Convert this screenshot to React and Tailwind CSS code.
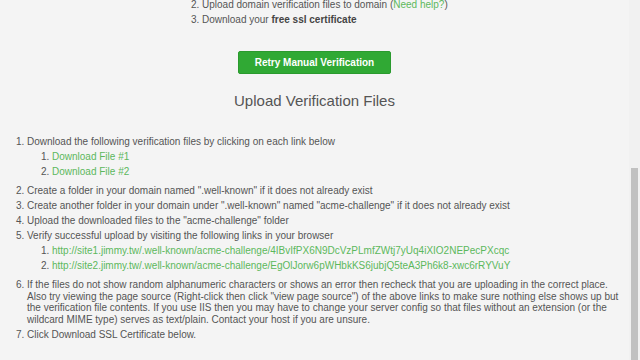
export default function App() {
  const links = [
    'http://site1.jimmy.tw/.well-known/acme-challenge/4IBvIfPX6N9DcVzPLmfZWtj7yUq4iXIO2NEPecPXcqc',
    'http://site2.jimmy.tw/.well-known/acme-challenge/EgOlJorw6pWHbkKS6jubjQ5teA3Ph6k8-xwc6rRYVuY',
  ]

  return (
    <div
      className="flex h-[360px] w-[640px] overflow-hidden bg-[#f4f4f4] text-[#555]"
      style={{ fontFamily: '"Liberation Sans", Arial, sans-serif' }}
    >
      <div className="min-w-0 flex-1">
        {/* steps at top, partly scrolled away */}
        <ol start={2} className="ml-[202px] mt-[-2px] list-decimal text-[10px] leading-[14.5px]">
          <li>
            Upload domain verification files to domain (<span className="text-[#5cb85c]">Need help?</span>)
          </li>
          <li>
            Download your <b className="text-[#444]">free ssl certificate</b>
          </li>
        </ol>

        <button className="mx-auto mt-[24px] flex h-[23px] w-[153px] items-center justify-center rounded-[2px] border border-[#2a9a2e] bg-[#30a934] text-[10px] font-bold text-white">
          Retry Manual Verification
        </button>

        <h2 className="mt-[18px] text-center text-[15px] leading-[18px] text-[#555]">Upload Verification Files</h2>

        <ol className="mt-[26px] list-decimal pl-[27px] pr-[9px] text-[10px] leading-[11.5px]">
          <li className="mb-[3.5px]">
            Download the following verification files by clicking on each link below
            <ol className="mb-[7px] list-decimal pl-[25px]">
              <li className="mt-[3.5px] text-[#5cb85c] marker:text-[#555]">Download File #1</li>
              <li className="mt-[3.5px] text-[#5cb85c] marker:text-[#555]">Download File #2</li>
            </ol>
          </li>
          <li className="mb-[3.5px]">Create a folder in your domain named ".well-known" if it does not already exist</li>
          <li className="mb-[3.5px]">
            Create another folder in your domain under ".well-known" named "acme-challenge" if it does not already exist
          </li>
          <li className="mb-[3.5px]">Upload the downloaded files to the "acme-challenge" folder</li>
          <li className="mb-[3.5px]">
            Verify successful upload by visiting the following links in your browser
            <ol className="mb-[8px] list-decimal pl-[25px]">
              {links.map((l) => (
                <li key={l} className="mt-[3.5px] text-[#5cb85c] marker:text-[#555]">
                  {l}
                </li>
              ))}
            </ol>
          </li>
          <li className="mb-[3.5px]">
            If the files do not show random alphanumeric characters or shows an error then recheck that you are uploading
            in the correct place. Also try viewing the page source (Right-click then click "view page source") of the above
            links to make sure nothing else shows up but the verification file contents. If you use IIS then you may have to
            change your server config so that files without an extension (or the wildcard MIME type) serves as text/plain.
            Contact your host if you are unsure.
          </li>
          <li>Click Download SSL Certificate below.</li>
        </ol>
      </div>

      {/* scrollbar */}
      <div className="flex w-[11px] flex-col bg-[#f1f1f1] px-[2px]">
        <div className="mt-[168px] flex-1 bg-[#c1c1c1]" />
      </div>
    </div>
  )
}
